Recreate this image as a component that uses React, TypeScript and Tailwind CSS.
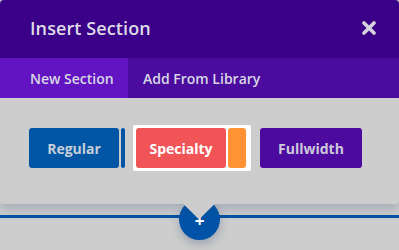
import React from 'react';

const font = { fontFamily: '"Open Sans", "Liberation Sans", sans-serif' };

export default function App() {
  return (
    <div className="relative w-[399px] h-[250px] overflow-hidden bg-[#cdcdcd]" style={font}>
      {/* divider line with add button */}
      <div className="absolute left-0 right-0 top-[215px] h-[3px] bg-[#0053a6]"></div>
      <div className="absolute left-[179px] top-[199px] w-[41px] h-[41px] rounded-full bg-[#0053a6] shadow-[0_4px_10px_rgba(0,40,90,0.25)] flex items-center justify-center">
        <span className="text-white font-bold text-[17px] leading-none mt-[1px]">+</span>
      </div>

      {/* modal */}
      <div className="relative z-10 w-[399px] rounded-[4px] shadow-[0_5px_12px_rgba(40,70,120,0.25)]">
        <div className="h-[58px] bg-[#3b0088] rounded-t-[4px] flex items-center justify-between pl-[30px] pr-[23px]">
          <h1 className="text-[18px] font-semibold text-[#dcdce6] tracking-[0.1px] mt-[-2px]">Insert Section</h1>
          <svg width="14" height="14" viewBox="0 0 14 14" className="mt-[-2px]">
            <path d="M2 2 L12 12 M12 2 L2 12" stroke="#d4d4dc" strokeWidth="3.6" strokeLinecap="round" />
          </svg>
        </div>
        <div className="h-[40px] bg-[#4a0b9e] flex text-[14px] font-semibold text-[#d8d8e4]">
          <div className="w-[128px] bg-[#6214c2] flex items-center pl-[30px]">New Section</div>
          <div className="flex items-center pl-[15px]">Add From Library</div>
        </div>
        <div className="relative h-[106px] bg-[#cdcdcd] rounded-b-[4px] pt-[30px] pl-[29px] flex items-start">
          <div className="flex items-center gap-[2px]">
            <div className="w-[90px] h-[40px] rounded-[3px] bg-[#0055a5] flex items-center justify-center text-[14px] font-bold text-[#c9cfd8]">Regular</div>
            <div className="w-[4px] h-[40px] rounded-[2px] bg-[#0055a5]"></div>
          </div>
          <div className="ml-[8px] mt-[-3px] pl-[3px] pr-[5px] py-[3px] bg-white rounded-[2px] flex gap-[2px]">
            <div className="w-[90px] h-[40px] rounded-[3px] bg-[#f05457] flex items-center justify-center text-[14px] font-bold text-white">Specialty</div>
            <div className="w-[18px] h-[40px] rounded-[3px] bg-[#ff9232]"></div>
          </div>
          <div className="ml-[9px] w-[102px] h-[40px] rounded-[3px] bg-[#4c0a9e] flex items-center justify-center text-[14px] font-bold text-[#cfc9dc]">Fullwidth</div>
          <div className="absolute left-[188px] top-[95px] w-[22px] h-[22px] rotate-45 bg-[#cdcdcd]"></div>
        </div>
      </div>
    </div>
  );
}
